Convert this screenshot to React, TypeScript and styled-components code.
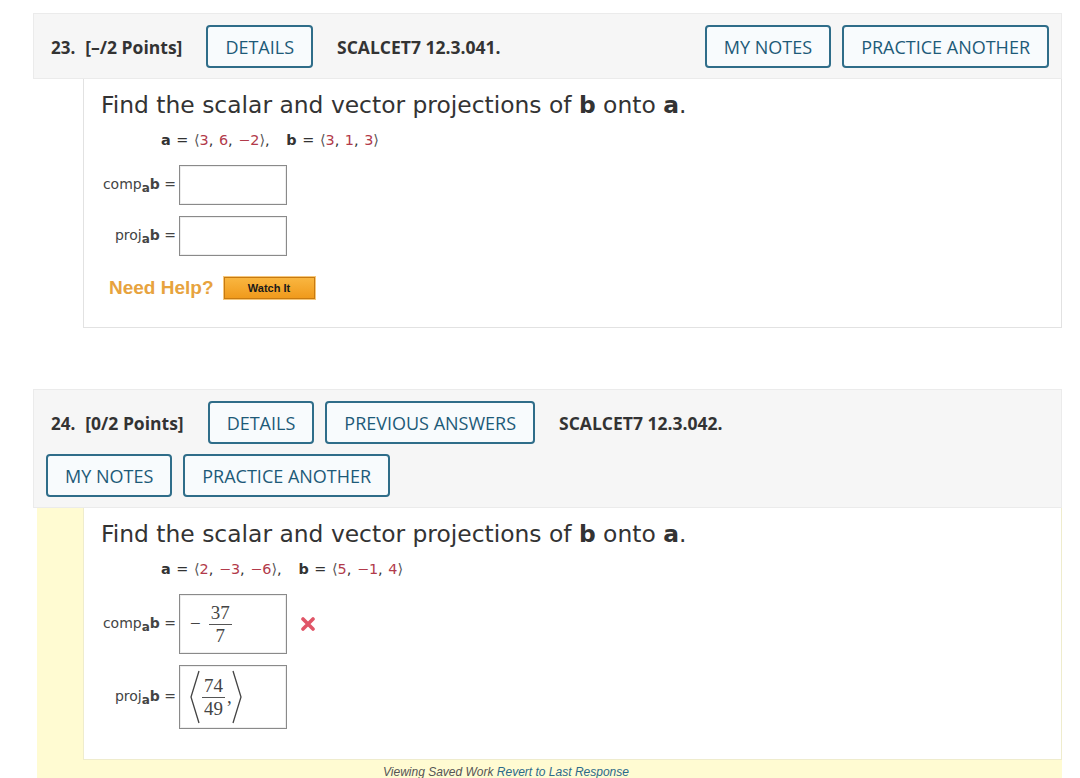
import React from 'react';
import styled, { createGlobalStyle } from 'styled-components';

const Global = createGlobalStyle`
  html, body { margin: 0; padding: 0; background: #fff; }
  body { font-family: "Open Sans", "DejaVu Sans", sans-serif; color: #333; }
`;

const Page = styled.div`
  width: 1029px;
  height: 778px;
  overflow: hidden;
  padding: 13px 0 0 33px;
`;

const Question = styled.section<{ $gap?: number }>`
  margin-bottom: ${p => p.$gap ?? 0}px;
`;

const Header = styled.div`
  display: flex;
  flex-wrap: wrap;
  align-items: center;
  gap: 10px 11px;
  padding: 11px 12px 10px 12px;
  background: #f6f6f6;
  border: 1px solid #ebebeb;
`;

const Number = styled.span`
  font-weight: 700;
  font-size: 17px;
  color: #333;
  margin-left: 5px;
  margin-right: 13px;
  white-space: nowrap;
`;

const Points = styled.span`
  font-size: 17.5px;
  margin-left: 10px;
`;

const Btn = styled.button`
  height: 43px;
  padding: 0 17px;
  border: 2px solid #2f6d89;
  border-radius: 4px;
  background: #f8fbfd;
  color: #1d5a78;
  font-family: "Open Sans", sans-serif;
  font-size: 18px;
  white-space: nowrap;
`;

const Code = styled.span`
  font-weight: 700;
  font-size: 17.5px;
  color: #333;
  margin-left: 13px;
  white-space: nowrap;
`;

const Group = styled.div<{ $push?: boolean }>`
  display: flex;
  gap: 11px;
  margin-left: ${p => (p.$push ? 'auto' : '0')};
`;

const Body = styled.div`
  margin-left: 50px;
  background: #fff;
  border: 1px solid #e2e2e2;
  border-top: none;
  padding: 12px 17px 28px 17px;
`;

const Saved = styled.div`
  margin-left: 4px;
  background: #fffbd2;
  padding-left: 46px;
`;

const SavedBody = styled(Body)`
  margin-left: 0;
  padding-bottom: 30px;
  border-color: #efeccd;
`;

const SavedNote = styled.div`
  padding: 5px 0 0 300px;
  font-family: "Liberation Sans", Arial, sans-serif;
  font-style: italic;
  font-size: 12px;
  color: #555;
  height: 20px;
`;

const Link = styled.a`
  color: #2b6a8a;
`;

const Prompt = styled.div`
  font-family: "DejaVu Sans", Verdana, sans-serif;
  font-size: 23.4px;
  line-height: 28px;
  color: #333;
`;

const Equation = styled.div`
  font-family: "DejaVu Sans", Verdana, sans-serif;
  font-size: 14.4px;
  line-height: 20px;
  color: #333;
  margin: 11px 0 15px 60px;
  word-spacing: 1px;
`;

const Num = styled.span`
  color: #b23a4a;
`;

const Bracket = styled.span`
  color: #555;
`;

const Fields = styled.div`
  display: grid;
  grid-template-columns: 78px auto;
  row-gap: 11px;
  align-items: center;
`;

const Label = styled.div`
  font-family: "DejaVu Sans", Verdana, sans-serif;
  font-size: 14px;
  color: #444;
  text-align: right;
  padding-right: 3px;
  white-space: nowrap;
`;

const Sub = styled.sub`
  font-weight: 700;
  font-size: 12px;
  vertical-align: -3px;
`;

const AnswerRow = styled.div`
  display: flex;
  align-items: center;
  gap: 14px;
`;

const AnswerBox = styled.div<{ $h: number }>`
  width: 108px;
  height: ${p => p.$h}px;
  box-sizing: border-box;
  border: 1px solid #8a8a8a;
  box-shadow: inset 0 0 0 1px #eee;
  background: #fff;
  display: flex;
  align-items: center;
  padding-left: 10px;
  font-family: "Liberation Serif", "DejaVu Serif", serif;
  font-size: 19px;
  color: #444;
`;

const Frac = styled.span`
  display: inline-flex;
  flex-direction: column;
  align-items: center;
  line-height: 21px;
  margin: 0 2px;
`;

const FracTop = styled.span`
  border-bottom: 1px solid #555;
  padding: 0 2px 1px;
`;

const Minus = styled.span`
  margin-right: 6px;
`;

const Help = styled.div`
  display: flex;
  align-items: center;
  gap: 10px;
  margin: 21px 0 0 8px;
`;

const HelpText = styled.span`
  font-family: "Liberation Sans", Arial, sans-serif;
  font-weight: 700;
  font-size: 19px;
  color: #e7a33e;
`;

const Watch = styled.button`
  width: 91px;
  height: 22px;
  border: 1px solid #c77a12;
  background: linear-gradient(#f9b640, #f09a1c);
  box-shadow: 0 0 0 1px #f6c77a;
  font-family: "Liberation Sans", Arial, sans-serif;
  font-weight: 700;
  font-size: 11px;
  color: #1a1a1a;
  padding: 0;
`;

const B = styled.b`
  font-weight: 700;
`;

function Vec({ a, b }: { a: string[]; b: string[] }) {
  const list = (xs: string[]) =>
    xs.map((x, i) => (
      <React.Fragment key={i}>
        <Num>{x}</Num>
        {i < xs.length - 1 ? ', ' : ''}
      </React.Fragment>
    ));
  return (
    <Equation>
      <B>a</B> = <Bracket>⟨</Bracket>{list(a)}<Bracket>⟩</Bracket>,&nbsp;&nbsp;&nbsp;
      <B>b</B> = <Bracket>⟨</Bracket>{list(b)}<Bracket>⟩</Bracket>
    </Equation>
  );
}

function Angle({ right }: { right?: boolean }) {
  return (
    <svg width="10" height="54" viewBox="0 0 10 54">
      <polyline
        points={right ? '1,1 9,27 1,53' : '9,1 1,27 9,53'}
        fill="none"
        stroke="#444"
        strokeWidth="1.3"
      />
    </svg>
  );
}

function Cross() {
  return (
    <svg width="14" height="14" viewBox="0 0 14 14">
      <path d="M2 2 L12 12 M12 2 L2 12" stroke="#e05567" strokeWidth="3.6" strokeLinecap="round" />
    </svg>
  );
}

const QuestionPrompt = () => (
  <Prompt>
    Find the scalar and vector projections of <B>b</B> onto <B>a</B>.
  </Prompt>
);

const Comp = () => (
  <Label>
    comp<Sub>a</Sub>
    <B>b</B> =
  </Label>
);

const Proj = () => (
  <Label>
    proj<Sub>a</Sub>
    <B>b</B> =
  </Label>
);

export default function App() {
  return (
    <Page>
      <Global />
      <Question $gap={61}>
        <Header>
          <Number>
            23.<Points>[–/2 Points]</Points>
          </Number>
          <Btn>DETAILS</Btn>
          <Code>SCALCET7 12.3.041.</Code>
          <Group $push>
            <Btn>MY NOTES</Btn>
            <Btn>PRACTICE ANOTHER</Btn>
          </Group>
        </Header>
        <Body>
          <QuestionPrompt />
          <Vec a={['3', '6', '−2']} b={['3', '1', '3']} />
          <Fields>
            <Comp />
            <AnswerBox $h={40} />
            <Proj />
            <AnswerBox $h={40} />
          </Fields>
          <Help>
            <HelpText>Need Help?</HelpText>
            <Watch>Watch It</Watch>
          </Help>
        </Body>
      </Question>

      <Question>
        <Header>
          <Number>
            24.<Points>[0/2 Points]</Points>
          </Number>
          <Btn>DETAILS</Btn>
          <Btn>PREVIOUS ANSWERS</Btn>
          <Code>SCALCET7 12.3.042.</Code>
          <Group>
            <Btn>MY NOTES</Btn>
            <Btn>PRACTICE ANOTHER</Btn>
          </Group>
        </Header>
        <Saved>
          <SavedBody>
            <QuestionPrompt />
            <Vec a={['2', '−3', '−6']} b={['5', '−1', '4']} />
            <Fields>
              <Comp />
              <AnswerRow>
                <AnswerBox $h={60}>
                  <Minus>−</Minus>
                  <Frac>
                    <FracTop>37</FracTop>
                    <span>7</span>
                  </Frac>
                </AnswerBox>
                <Cross />
              </AnswerRow>
              <Proj />
              <AnswerBox $h={64}>
                <Angle />
                <Frac>
                  <FracTop>74</FracTop>
                  <span>49</span>
                </Frac>
                ,
                <Angle right />
              </AnswerBox>
            </Fields>
          </SavedBody>
          <SavedNote>
            Viewing Saved Work <Link>Revert to Last Response</Link>
          </SavedNote>
        </Saved>
      </Question>
    </Page>
  );
}
